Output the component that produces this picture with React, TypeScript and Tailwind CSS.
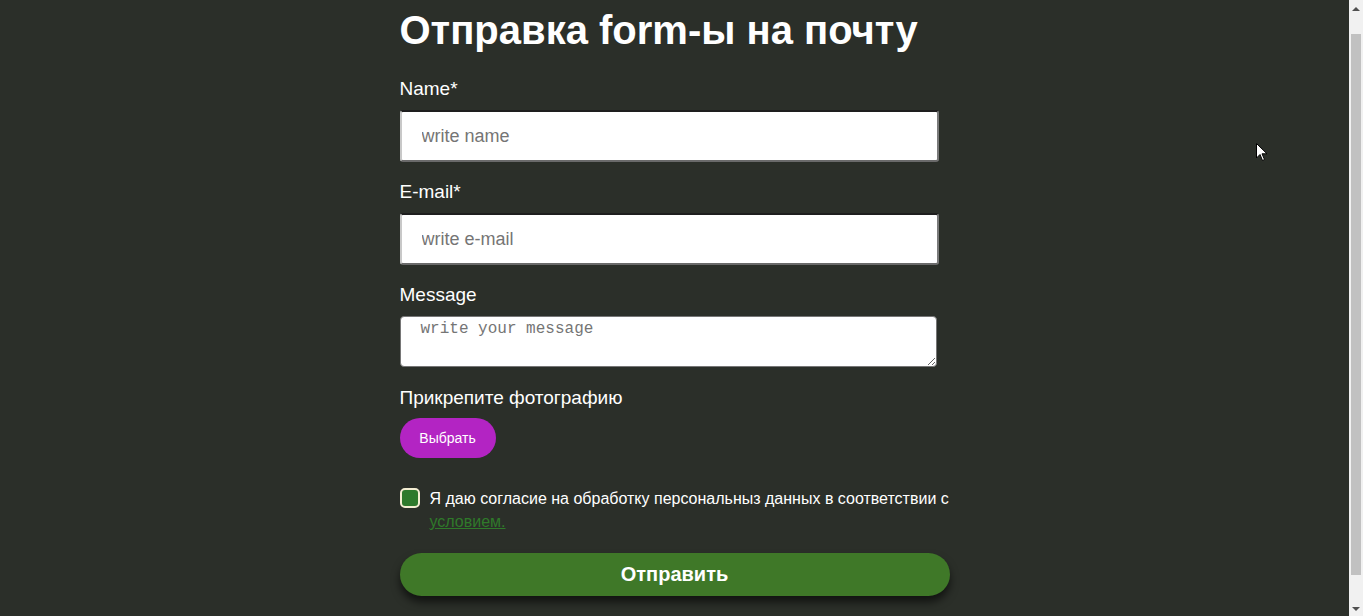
import { useState } from "react";

const font = { fontFamily: '"Liberation Sans", Arial, sans-serif' };

const Field = ({ label, placeholder }: { label: string; placeholder: string }) => (
  <div className="mb-[20px]">
    <label className="mb-[11px] block text-[19px] leading-[20px] text-white">{label}</label>
    <input
      type="text"
      placeholder={placeholder}
      className="block h-[52px] w-[98%] rounded-[3px] border-2 border-t-[#1e1e1e] border-l-[#c8c8c8] border-r-[#7a7a7a] border-b-[#6a6a6a] bg-white px-[20px] text-[18px] text-black outline-none placeholder:text-[#757575]"
    />
  </div>
);

const Scrollbar = () => (
  <div className="flex h-full w-[14px] shrink-0 flex-col items-center bg-[#f1f1f1]">
    <div className="flex h-[17px] w-full items-center justify-center">
      <div className="h-0 w-0 border-x-[4px] border-b-[4px] border-x-transparent border-b-[#505050]" />
    </div>
    <div className="mt-[17px] h-[541px] w-[10px] bg-[#c1c1c1]" />
    <div className="flex flex-1 items-end justify-center pb-[5px]">
      <div className="h-0 w-0 border-x-[4px] border-t-[4px] border-x-transparent border-t-[#505050]" />
    </div>
  </div>
);

export default function App() {
  const [agree, setAgree] = useState(true);

  return (
    <div className="relative flex h-[616px] w-full overflow-hidden bg-[#2b2f29]" style={font}>
      <main className="flex flex-1 justify-center">
        <form className="w-[550px] pt-[6px]" onSubmit={(e) => e.preventDefault()}>
          <h1 className="mb-[25px] text-[40px] font-bold leading-[48px] text-white">
            Отправка form-ы на почту
          </h1>

          <Field label="Name*" placeholder="write name" />
          <Field label="E-mail*" placeholder="write e-mail" />

          <div className="mb-[21px]">
            <label className="mb-[11px] block text-[19px] leading-[20px] text-white">Message</label>
            <textarea
              placeholder="write your message"
              className="block h-[51px] w-[537px] rounded-[4px] border border-[#767676] bg-white px-[20px] pt-[2px] text-[16px] leading-[20px] text-black outline-none placeholder:text-[#757575]"
              style={{ fontFamily: '"Liberation Mono", "DejaVu Sans Mono", monospace' }}
            />
          </div>

          <p className="mb-[10px] text-[19px] leading-[20px] text-white">Прикрепите фотографию</p>
          <button
            type="button"
            className="h-[40px] w-[96px] rounded-full bg-[#b324c3] text-[14px] text-white"
          >
            Выбрать
          </button>

          <div className="mt-[29px] flex gap-[10px]">
            <button
              type="button"
              onClick={() => setAgree(!agree)}
              className={`mt-[1px] h-[20px] w-[20px] shrink-0 rounded-[5px] border-2 border-[#f3eed2] ${
                agree ? "bg-[#2e7a2c]" : "bg-transparent"
              }`}
            />
            <p className="text-[16px] leading-[23px] text-white">
              Я даю согласие на обработку персональныз данных в соответствии с{" "}
              <a href="#" className="text-[#2f7a2a] underline">
                условием.
              </a>
            </p>
          </div>

          <button
            type="submit"
            className="mt-[20px] h-[43px] w-full rounded-[22px] bg-[#3f7828] pb-[2px] text-[20px] font-bold text-white shadow-[0_6px_8px_rgba(0,0,0,0.6)]"
          >
            Отправить
          </button>
        </form>
      </main>

      <Scrollbar />

      {/* mouse cursor */}
      <svg className="absolute left-[1256px] top-[143px]" width="12" height="19" viewBox="0 0 12 19">
        <path d="M0.5 0.5 L0.5 15 L4 11.5 L6.5 17.5 L8.5 16.5 L6 10.8 L11 10.8 Z" fill="#fff" stroke="#000" strokeWidth="1" />
      </svg>
    </div>
  );
}
